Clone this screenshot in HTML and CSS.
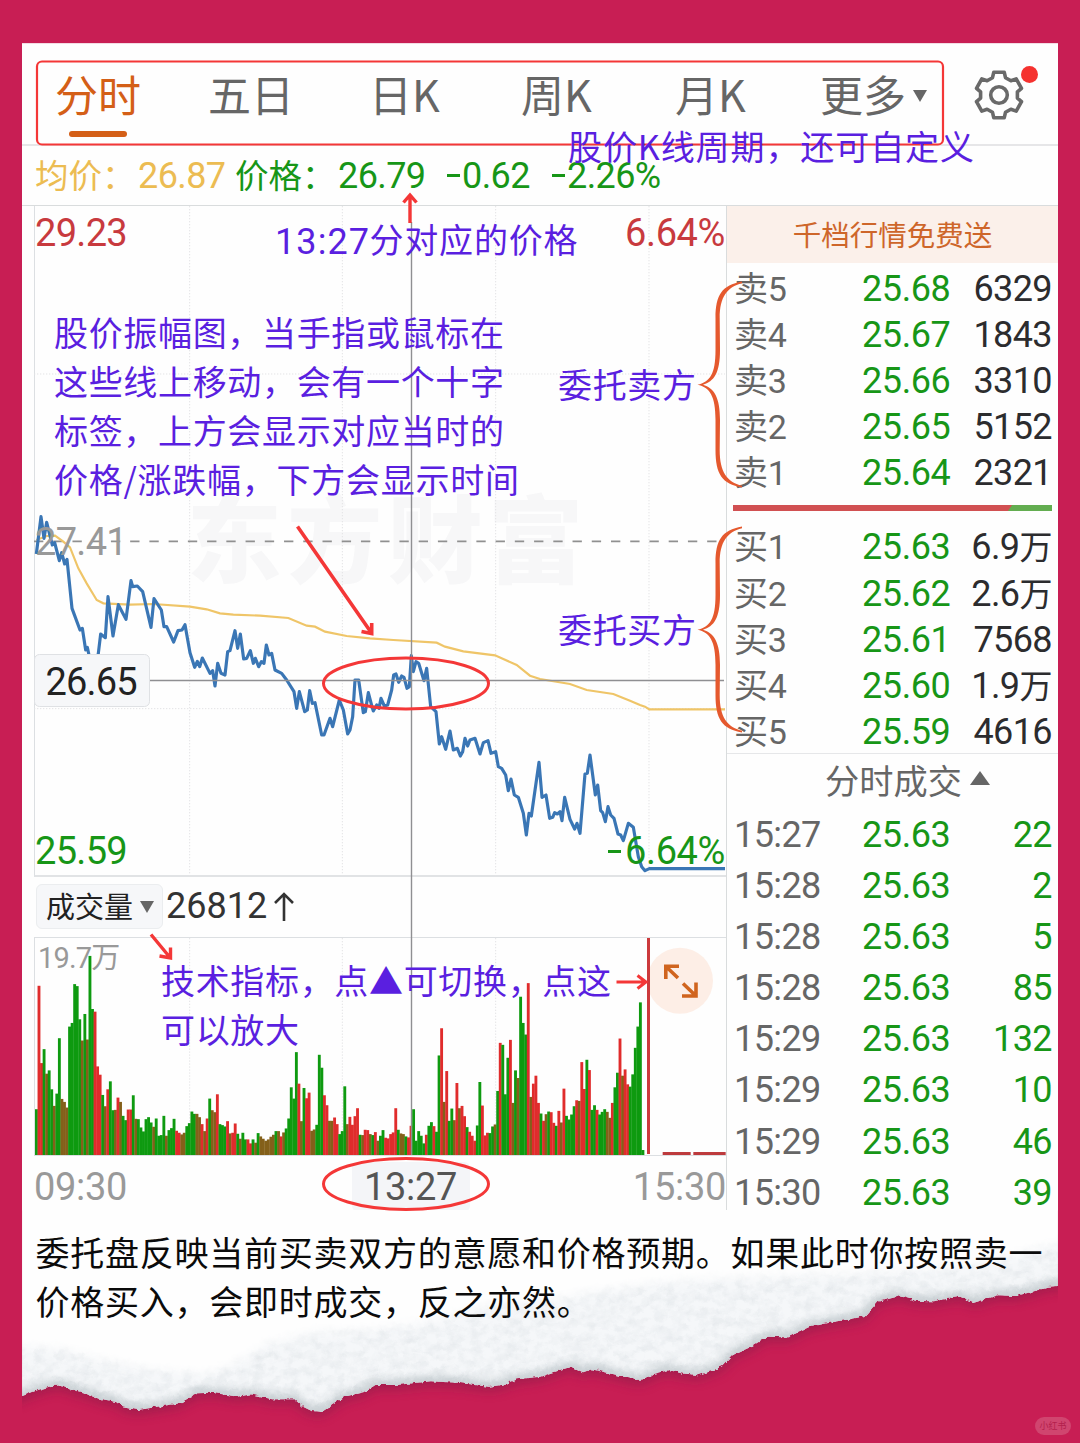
FILE: index.html
```html
<!DOCTYPE html>
<html lang="zh-CN">
<head>
<meta charset="utf-8">
<title>分时图说明</title>
<link rel="stylesheet" href="styles.css">
</head>
<body>
<main class="page">
  <section class="card">
    <header class="tabs">
      <nav class="tab-list">
        <span class="tab active">分时</span>
        <span class="tab">五日</span>
        <span class="tab">日K</span>
        <span class="tab">周K</span>
        <span class="tab">月K</span>
        <span class="tab">更多<i class="caret"></i></span>
      </nav>
      <div class="settings">
        <svg viewBox="-26 -26 52 52" width="52" height="52" fill="none" stroke="#696969" stroke-width="3.6" stroke-linejoin="round">
          <path d="M-5.2-22.8H5.2L6.5-17.3L11.9-14.2L17.2-16.1L22.5-6.7L18.4-3.1V3.1L22.5 6.7L17.2 16.1L11.9 14.2L6.5 17.3L5.2 22.8H-5.2L-6.5 17.3L-11.9 14.2L-17.2 16.1L-22.5 6.7L-18.4 3.1V-3.1L-22.5-6.7L-17.2-16.1L-11.9-14.2L-6.5-17.3Z"/>
          <circle r="8.3"/>
        </svg>
        <i class="dot"></i>
      </div>
    </header>

    <div class="quote">
      <span class="avg cn">均价：</span><span class="avg">26.87</span>
      <span class="cn">价格：</span><span>26.79</span><span><i class="minus"></i>0.62</span><span><i class="minus"></i>2.26%</span>
    </div>

    <div class="body">
      <div class="left">
        <div class="price-chart">
          <svg class="plot" viewBox="42 -852 2079 2010" preserveAspectRatio="none">
            <g class="watermark"><text x="500" y="257" textLength="1190">东方财富</text></g>
            <g class="grid">
              <path d="M509-852V1158M967-852V1158M1427-852V1158M1887-852V1158M42-348H2115M42 656H2115"/>
            </g>
            <path class="base" d="M42 154H2115"/>
            <polyline class="avg-line" points="49,150 80,138 105,137 130,155 150,172 175,235 200,280 230,330 250,340 330,344 400,342 510,350 560,358 600,370 640,374 720,377 805,384 860,407 885,410 915,425 980,438 1050,445 1120,450 1250,458 1275,470 1330,484 1425,496 1490,525 1530,557 1560,567 1650,582 1700,600 1780,612 1830,632 1860,645 1875,650 1888,658 2115,658"/>
            <polyline class="price-line" points="49,192 63,80 72,145 80,97 97,165 104,158 118,212 125,188 134,222 141,208 156,355 180,420 187,415 197,480 202,472 207,495 220,560 235,490 242,432 256,443 264,320 279,438 295,344 318,388 333,272 338,290 352,288 368,305 393,412 402,326 424,360 432,410 440,410 461,456 474,422 486,420 495,404 510,488 524,532 532,514 539,530 547,504 570,550 578,542 585,588 593,520 603,550 615,555 623,485 630,482 645,422 653,475 661,432 671,507 680,505 691,482 700,520 706,505 716,530 724,515 732,520 739,465 747,495 755,490 765,540 785,550 800,570 822,605 830,655 838,605 854,665 862,660 869,602 877,640 885,638 905,735 912,735 930,685 938,710 958,630 970,660 983,732 990,720 998,680 1005,570 1016,570 1030,668 1036,665 1045,608 1056,650 1060,663 1070,645 1077,655 1083,625 1093,648 1103,645 1115,600 1121,555 1128,552 1136,577 1145,558 1152,562 1161,595 1168,590 1174,497 1180,545 1188,515 1196,520 1212,572 1220,535 1232,650 1248,665 1258,762 1265,740 1277,778 1290,723 1300,780 1312,775 1321,798 1328,785 1335,745 1343,768 1350,750 1365,745 1380,792 1390,758 1404,752 1413,790 1427,785 1435,830 1445,835 1457,855 1465,902 1473,867 1483,915 1495,922 1510,970 1519,1035 1527,970 1534,978 1557,817 1566,922 1578,915 1589,985 1598,982 1604,968 1612,972 1620,965 1626,992 1634,922 1650,988 1664,1017 1671,1000 1680,1030 1695,852 1702,850 1710,795 1726,915 1733,885 1742,962 1748,968 1756,995 1764,950 1772,975 1782,985 1794,1032 1802,1035 1810,1052 1825,1000 1840,1012 1855,1100 1865,1130 1875,1142 1888,1136 2115,1136"/>
          </svg>
          <div class="scale top"><span>29.23</span><span class="pct">6.64%</span></div>
          <div class="scale mid">27.41</div>
          <div class="scale bottom"><span>25.59</span><span class="pct"><i class="minus"></i>6.64%</span></div>
        </div>
        <div class="indicator">
          <span class="picker">成交量<i class="caret"></i></span>
          <span class="volume">26812</span>
          <svg width="20" height="30" viewBox="0 0 20 30" fill="none" stroke="#333" stroke-width="2.6"><path d="M10 29V2M1 11L10 2L19 11"/></svg>
        </div>
        <div class="volume-chart">
          <svg class="plot" id="volume" viewBox="42 201 2079 654" preserveAspectRatio="none">
            <path class="grid" d="M509 201V855M967 201V855M1427 201V855"/>
          </svg>
          <span class="peak">19.7万</span>
        </div>
        <div class="times"><span>09:30</span><span class="now">13:27</span><span>15:30</span></div>
      </div>

      <aside class="right">
        <div class="banner">千档行情免费送</div>
        <div class="book">
          <div class="row"><span>卖5</span><b>25.68</b><em>6329</em></div>
          <div class="row"><span>卖4</span><b>25.67</b><em>1843</em></div>
          <div class="row"><span>卖3</span><b>25.66</b><em>3310</em></div>
          <div class="row"><span>卖2</span><b>25.65</b><em>5152</em></div>
          <div class="row"><span>卖1</span><b>25.64</b><em>2321</em></div>
        </div>
        <div class="ratio"><i class="sell"></i></div>
        <div class="book">
          <div class="row"><span>买1</span><b>25.63</b><em>6.9<small>万</small></em></div>
          <div class="row"><span>买2</span><b>25.62</b><em>2.6<small>万</small></em></div>
          <div class="row"><span>买3</span><b>25.61</b><em>7568</em></div>
          <div class="row"><span>买4</span><b>25.60</b><em>1.9<small>万</small></em></div>
          <div class="row"><span>买5</span><b>25.59</b><em>4616</em></div>
        </div>
        <div class="deals-title">分时成交<i class="up"></i></div>
        <div class="deals">
          <div class="row"><span>15:27</span><b>25.63</b><em>22</em></div>
          <div class="row"><span>15:28</span><b>25.63</b><em>2</em></div>
          <div class="row"><span>15:28</span><b>25.63</b><em>5</em></div>
          <div class="row"><span>15:28</span><b>25.63</b><em>85</em></div>
          <div class="row"><span>15:29</span><b>25.63</b><em>132</em></div>
          <div class="row"><span>15:29</span><b>25.63</b><em>10</em></div>
          <div class="row"><span>15:29</span><b>25.63</b><em>46</em></div>
          <div class="row"><span>15:30</span><b>25.63</b><em>39</em></div>
        </div>
      </aside>
    </div>
  </section>

  <footer class="note">
    <svg class="torn" viewBox="0 0 3136 699" preserveAspectRatio="none">
      <defs>
        <filter id="rough" x="-2%" y="-5%" width="104%" height="115%">
          <feTurbulence type="fractalNoise" baseFrequency=".07" numOctaves="2" seed="4" result="n"/>
          <feDisplacementMap in="SourceGraphic" in2="n" scale="14" xChannelSelector="R" yChannelSelector="G"/>
        </filter>
        <filter id="fiber" x="0" y="0" width="100%" height="100%">
          <feTurbulence type="fractalNoise" baseFrequency=".03 .04" numOctaves="4" seed="9"/>
          <feColorMatrix values="0 0 0 0 .68  0 0 0 0 .72  0 0 0 0 .75  0 .9 0 0 -.32"/>
        </filter>
        <filter id="soft" x="-5%" y="-20%" width="110%" height="150%"><feGaussianBlur stdDeviation="16"/></filter>
        <filter id="softer" x="-5%" y="-20%" width="110%" height="150%"><feGaussianBlur stdDeviation="14"/></filter>
        <clipPath id="sheet"><rect x="64" y="-10" width="3008" height="720"/></clipPath>
        <path id="edge" d="M20-60V580L65 558L110 540L150 528L180 526L205 538L250 550L290 566L340 576L360 592L400 600L450 592L520 580L575 550L620 548L690 560L730 553L790 568L855 568L880 590L905 603L935 605L965 585L1000 560L1060 545L1090 525L1150 525L1250 514L1330 518L1420 530L1460 524L1500 508L1568 500L1598 490L1658 470L1693 487L1718 478L1768 490L1808 500L1848 510L1878 506L1898 492L1943 480L1978 490L2028 496L2068 482L2098 468L2128 435L2178 412L2228 380L2288 382L2348 352L2408 338L2468 328L2513 318L2548 275L2613 258L2658 272L2708 274L2788 260L2828 278L2898 256L2948 258L2998 245L3043 230L3120 224V-60Z"/>
        <clipPath id="paper"><use href="#edge"/></clipPath>
      </defs>
      <g clip-path="url(#sheet)">
        <use href="#edge" fill="#8a1f48" opacity=".6" transform="translate(0 14)" filter="url(#soft)"/>
        <g filter="url(#rough)">
          <use href="#edge" fill="#f5f7f9"/>
          <g clip-path="url(#paper)">
            <rect width="3136" height="699" filter="url(#fiber)"/>
            <use href="#edge" fill="none" stroke="#bcc5c9" stroke-width="28" filter="url(#softer)"/>
            <path filter="url(#softer)" fill="#fefefe" d="M0-60V410L170 415L280 445L420 478L580 492L640 480L700 450L780 400L920 365L1080 360L1250 335L1420 285L1600 270L1750 240L1950 215L2100 205L2350 195L2600 182L2850 165L2980 125L3180 70V-60Z"/>
          </g>
        </g>
      </g>
    </svg>
    <p>委托盘反映当前买卖双方的意愿和价格预期。如果此时你按照卖一<br>价格买入，会即时成交，反之亦然。</p>
    <span class="source">小红书</span>
  </footer>

  <!-- crosshair and hand-drawn callouts over the quote screen -->
  <svg class="callouts" viewBox="0 0 1080 1443" width="1080" height="1443">
    <path d="M411.5 222V1155M150 680.5H724" stroke="#8f8f92" stroke-width="1.4" fill="none"/>
    <rect x="34.5" y="654.5" width="115" height="52" rx="5" fill="#f6f7f9" stroke="#dfe1e4"/>
    <text class="tag" x="45.500" y="695" textLength="92">26.65</text>
    <circle cx="680" cy="980.7" r="33" fill="#fdeee6"/>
    <path d="M648.5 938V1154" stroke="#cc3a3c" stroke-width="3"/>
    <path d="M665.8 979V966.2H679M666.5 967L678 978M682 996H696V982.5M695 995L683 983.5" fill="none" stroke="#d0641e" stroke-width="3.6"/>
    <g fill="none" stroke="#f43737" stroke-width="3">
      <rect x="37" y="61.5" width="906" height="83" rx="5" stroke-width="2.2"/>
      <ellipse cx="406" cy="683.5" rx="82.5" ry="25.5"/>
      <ellipse cx="406" cy="1184" rx="82.5" ry="25.5"/>
      <path stroke-width="3.4" d="M410 223V195M403.500 202.500L410 195L416.500 202.500"/>
      <path stroke-width="3.6" d="M297.500 526.500L371.500 633M371.700 623V633.500L361.500 631.500"/>
      <path stroke-width="3.4" d="M151 934.500L170 957.500M170.500 947.500V958L159.500 956"/>
      <path stroke-width="3" d="M616.500 982H646M637.500 975.500L646 982L637.500 988.500"/>
    </g>
    <g fill="#e5592e">
      <path id="brace" d="M742 281.500C722 285 715.500 295 715.500 318V350C715.500 374 710 382 697.500 384.700C710 387.500 715.500 396 715.500 420V450C715.500 474 722 484 742 487.500V485.800C727 482 719.700 472 719.700 450L720 420C720 397 714 388 703 384.700C714 381.500 720 373 720 350L719.700 318C719.700 297 727 287 742 283.200Z"/>
      <use href="#brace" transform="translate(0 245)"/>
    </g>
    <g class="memo">
      <text x="568" y="160" textLength="406">股价K线周期，还可自定义</text>
      <text class="num" x="275" y="254" textLength="94">13:27</text>
      <text x="369.500" y="253" textLength="208">分对应的价格</text>
      <text x="54" y="346" textLength="450">股价振幅图，当手指或鼠标在</text>
      <text x="54" y="395" textLength="450">这些线上移动，会有一个十字</text>
      <text x="54" y="444" textLength="450">标签，上方会显示对应当时的</text>
      <text x="54" y="493" textLength="465">价格/涨跌幅，下方会显示时间</text>
      <text x="558" y="398" textLength="138">委托卖方</text>
      <text x="558" y="643" textLength="138">委托买方</text>
      <text x="161" y="994" textLength="450">技术指标，点▲可切换，点这</text>
      <text x="161" y="1043" textLength="138">可以放大</text>
    </g>
  </svg>
</main>
<script src="volume.js"></script>
</body>
</html>
```
FILE: styles.css
```css
* { box-sizing: border-box; }
body {
  margin: 0;
  background: #c81e54;
  font-family: Roboto, "Noto Sans CJK SC", sans-serif;
}
i, em { font-style: normal; }
b { font-weight: 400; }
.page {
  position: relative;
  width: 1080px;
  height: 1443px;
  padding-top: 43px;
  overflow: hidden;
  background: #c81e54;
}
.card {
  width: 1036px;
  height: 1168px;
  margin-left: 22px;
  background: #fefefe;
  border-top: 1px solid #f3dbe3;
}

/* period tabs */
.tabs {
  display: flex;
  height: 102px;
  border-bottom: 2px solid #e6e6e8;
}
.tab-list {
  display: grid;
  grid-template-columns: 153px 161px 152px 154px 147px 120px;
  padding-left: 33px;
  font: 43px/99px "Noto Sans CJK SC", sans-serif;
  color: #666;
}
.tab { white-space: nowrap; }
.tab.active {
  width: 86px;
  color: #d45f17;
}
.tab.active::after {
  content: "";
  display: block;
  width: 58px;
  height: 6px;
  margin: -12px 0 0 14px;
  border-radius: 3px;
  background: #d45f17;
}
.tab:last-child { margin-left: -2px; }
.caret {
  display: inline-block;
  margin-left: 7px;
  border: 7.500px solid transparent;
  border-top: 12px solid #666;
  border-bottom: 0;
  vertical-align: 10px;
}
.settings {
  position: relative;
  margin: 25px 0 0 31px;
  height: 52px;
}
.dot {
  position: absolute;
  left: 48px;
  top: -3px;
  width: 17px;
  height: 17px;
  border-radius: 50%;
  background: #f5322f;
}

/* quote line */
.quote {
  display: grid;
  grid-template-columns: 103px 97px 103px 108px 105px auto;
  height: 60px;
  padding-left: 13px;
  font-size: 36px;
  line-height: 61px;
  letter-spacing: -.600px;
  color: #179617;
  border-bottom: 1px solid #d9dcdd;
  white-space: nowrap;
}
.quote .cn { font-size: 33.500px; letter-spacing: 0; }
.avg { color: #ecbc52; }
.minus {
  display: inline-block;
  width: 13px;
  height: 2.800px;
  margin: 0 2px 0 1px;
  background: #179617;
  vertical-align: 11px;
}

.body { display: flex; }
.left {
  width: 705px;
  padding-left: 12px;
  border-right: 1px solid #d9dcdd;
}
.price-chart {
  position: relative;
  display: flex;
  flex-direction: column;
  justify-content: space-between;
  height: 671px;
  border-left: 1px solid #dcdfe2;
  border-bottom: 2px solid #e1e3e5;
}
.plot {
  position: absolute;
  left: -1px;
  top: 0;
  width: 693px;
  height: 670px;
}
.grid path, path.grid {
  fill: none;
  stroke: #e3e3e5;
  stroke-width: 3;
  stroke-dasharray: 4 5;
}
.base { stroke: #909090; stroke-width: 5; stroke-dasharray: 28 29.700; }
.avg-line { fill: none; stroke: #efc568; stroke-width: 6.500; }
.price-line { fill: none; stroke: #3a76b5; stroke-width: 9.500; stroke-linejoin: round; }
.watermark text {
  font: 900 285px "Noto Sans CJK SC", sans-serif;
  fill: #f7f7f8;
}
.scale {
  position: relative;
  display: flex;
  justify-content: space-between;
  font-size: 38px;
  line-height: 55px;
  letter-spacing: -.700px;
  color: #c83a3e;
}
.scale.mid { color: #999; margin-top: -4px; }
.scale.bottom { color: #179617; line-height: 47px; }
.scale .pct { font-size: 38px; letter-spacing: -.400px; margin-right: 1px; }
.scale .minus { margin-right: 4px; }

.indicator {
  display: flex;
  align-items: center;
  height: 60px;
}
.picker {
  width: 127px;
  height: 45px;
  margin: -2px 3px 0 2px;
  padding-left: 9px;
  border: 1px solid #ebedef;
  border-radius: 6px;
  background: #f6f7f9;
  font: 29px/40px "Noto Sans CJK SC", sans-serif;
  color: #222;
  white-space: nowrap;
}
.picker .caret { vertical-align: 5px; }
.volume { font-size: 36px; color: #333; margin: -2px 7px 0 0; }

.volume-chart {
  position: relative;
  height: 219px;
  border: solid #dcdfe2;
  border-width: 1px 0 1px 1px;
}
.volume-chart .plot { height: 217px; }
.peak {
  position: relative;
  display: block;
  padding-left: 3px;
  font-size: 29px;
  line-height: 40px;
  letter-spacing: -.800px;
  color: #999;
}
.times {
  display: flex;
  justify-content: space-between;
  padding: 6px 0 0;
  font-size: 38px;
  line-height: 50px;
  letter-spacing: -.300px;
  color: #999;
}
.times .now {
  width: 118px;
  margin-left: 17px;
  margin-right: -44px;
  text-align: center;
  border-radius: 6px;
  background: #f4f5f8;
  color: #555;
}

/* order book */
.right { width: 331px; }
.banner {
  height: 57px;
  margin-bottom: 3px;
  background: #fbf0ea;
  font: 28.500px/55px "Noto Sans CJK SC", sans-serif;
  text-align: center;
  color: #ce662a;
}
.row {
  display: grid;
  grid-template-columns: 128px 100px 1fr;
  height: 46.100px;
  padding: 0 6px 0 7px;
  font-size: 36px;
  line-height: 47px;
  letter-spacing: -.600px;
  color: #666;
  white-space: nowrap;
}
.row b { letter-spacing: -.400px; color: #179617; }
.row em { text-align: right; color: #2c2c2e; margin-left: -10px; }
.row small { font-size: 33px; letter-spacing: -.500px; }
.book span { font-size: 34px; letter-spacing: -.200px; }
.ratio {
  height: 6px;
  margin: 8.500px 6px 13.500px;
  background: #63ad50;
}
.sell {
  display: block;
  width: 279px;
  height: 6px;
  background: #d15052;
  clip-path: polygon(0 0, 100% 0, calc(100% - 4px) 100%, 0 100%);
}
.deals-title {
  display: flex;
  align-items: center;
  justify-content: center;
  height: 56px;
  margin-top: -2px;
  padding: 0 0 5px 30px;
  border-top: 1px solid #e6e7e9;
  font: 34.200px/48px "Noto Sans CJK SC", sans-serif;
  color: #666;
}
.up {
  margin: -2px 0 0 8px;
  border: 10px solid transparent;
  border-bottom: 14px solid #666;
  border-top: 0;
}
.deals .row { height: 51.100px; line-height: 52px; }
.deals em { color: #179617; }

/* torn paper note */
.note { position: relative; height: 232px; }
.torn { position: absolute; left: 0; top: -1px; width: 1080px; height: 233px; }
.note p {
  position: relative;
  margin: 0;
  padding: 16px 0 0 35.500px;
  font: 34px/49px "Noto Sans CJK SC", sans-serif;
  letter-spacing: .750px;
  color: #0b0b0b;
  white-space: nowrap;
}
.source {
  position: absolute;
  left: 1035px;
  top: 206px;
  width: 36px;
  height: 18px;
  border-radius: 9px;
  background: #d0456f;
  font: 9px/17px "Noto Sans CJK SC", sans-serif;
  text-align: center;
  color: #b31f4c;
}

.callouts { position: absolute; left: 0; top: 0; }
.tag { font: 38px Roboto, sans-serif; fill: #222; }
.memo {
  font: 34px "Noto Sans CJK SC", sans-serif;
  fill: #5a1fe0;
}
.memo .num { font: 36px Roboto, sans-serif; }
```
FILE: volume.js
```js
// One entry per minute: g = falling, r = rising, b = unchanged; number = top of the bar in plot units.
const bars = `g717 r345 r578 g536 b610 g600 g657 b707 g670 g503 b686 b695 b712 g468 g457 g340 g346 g446 b510 g430
b507 g255 g415 r423 r588 r613 g674 b708 r657 g633 g720 b719 r682 b695 g737 g750 r718 r718 g675 b746
g747 g772 g784 g747 g741 g757 b770 g745 g797 g795 g737 b797 g780 g774 g746 r782 r788 b793 b788 g768
g759 g724 g731 b731 b741 r762 b783 r745 g685 b720 b726 r672 g762 g765 g769 r753 b790 r788 r760 g791
b806 g788 g808 r808 r820 g808 b818 g789 b799 b806 b812 b808 b800 b794 g783 b783 r799 b787 g775 g745
g651 g685 g545 r640 b753 g653 r684 r667 b782 b778 g764 g553 g592 r675 r705 b752 b752 r742 r762 g792
g783 g648 b762 r740 r764 r738 r714 g794 b795 r779 r780 b792 g795 r786 b812 g797 g780 r803 r805 r792
r787 r714 g779 b790 b792 g799 r802 r767 g717 g812 g783 g797 g820 r794 g767 g756 r768 g785 g555 r473
b695 r602 g752 g715 b750 r638 b714 r707 r738 g771 r785 r797 r812 g766 g635 r706 r796 r788 g789 g769
b763 g662 r517 g523 g672 g562 r508 b698 g600 b623 g378 g457 g492 r337 b680 r640 r616 r698 g730 r752
b732 g724 r726 r758 g767 r722 b757 r655 g737 g748 g733 g708 r690 b692 r575 r656 g568 r599 g719 g705
r719 g733 g725 g717 b725 b743 r698 g651 g607 r504 b616 r597 r642 g649 g612 g532 g468 g395 g840`.split(/\s+/);

const fills = { g: "#0e9a10", r: "#e02c2c", b: "#84601a" };
const svg = document.getElementById("volume");
const addBar = (x, y, width, height, fill) => {
  const rect = document.createElementNS("http://www.w3.org/2000/svg", "rect");
  Object.entries({ x, y, width, height, fill }).forEach(([k, v]) => rect.setAttribute(k, v));
  svg.appendChild(rect);
};

bars.forEach((bar, i) => {
  const top = Number(bar.slice(1));
  addBar(45 + i * 7.645, top, 8.6, 855 - top, fills[bar[0]]);
});

// after-hours volume
addBar(1928, 846, 84, 9, "#bd3a3c");
addBar(2020, 846, 97, 9, "#bd3a3c");
```
